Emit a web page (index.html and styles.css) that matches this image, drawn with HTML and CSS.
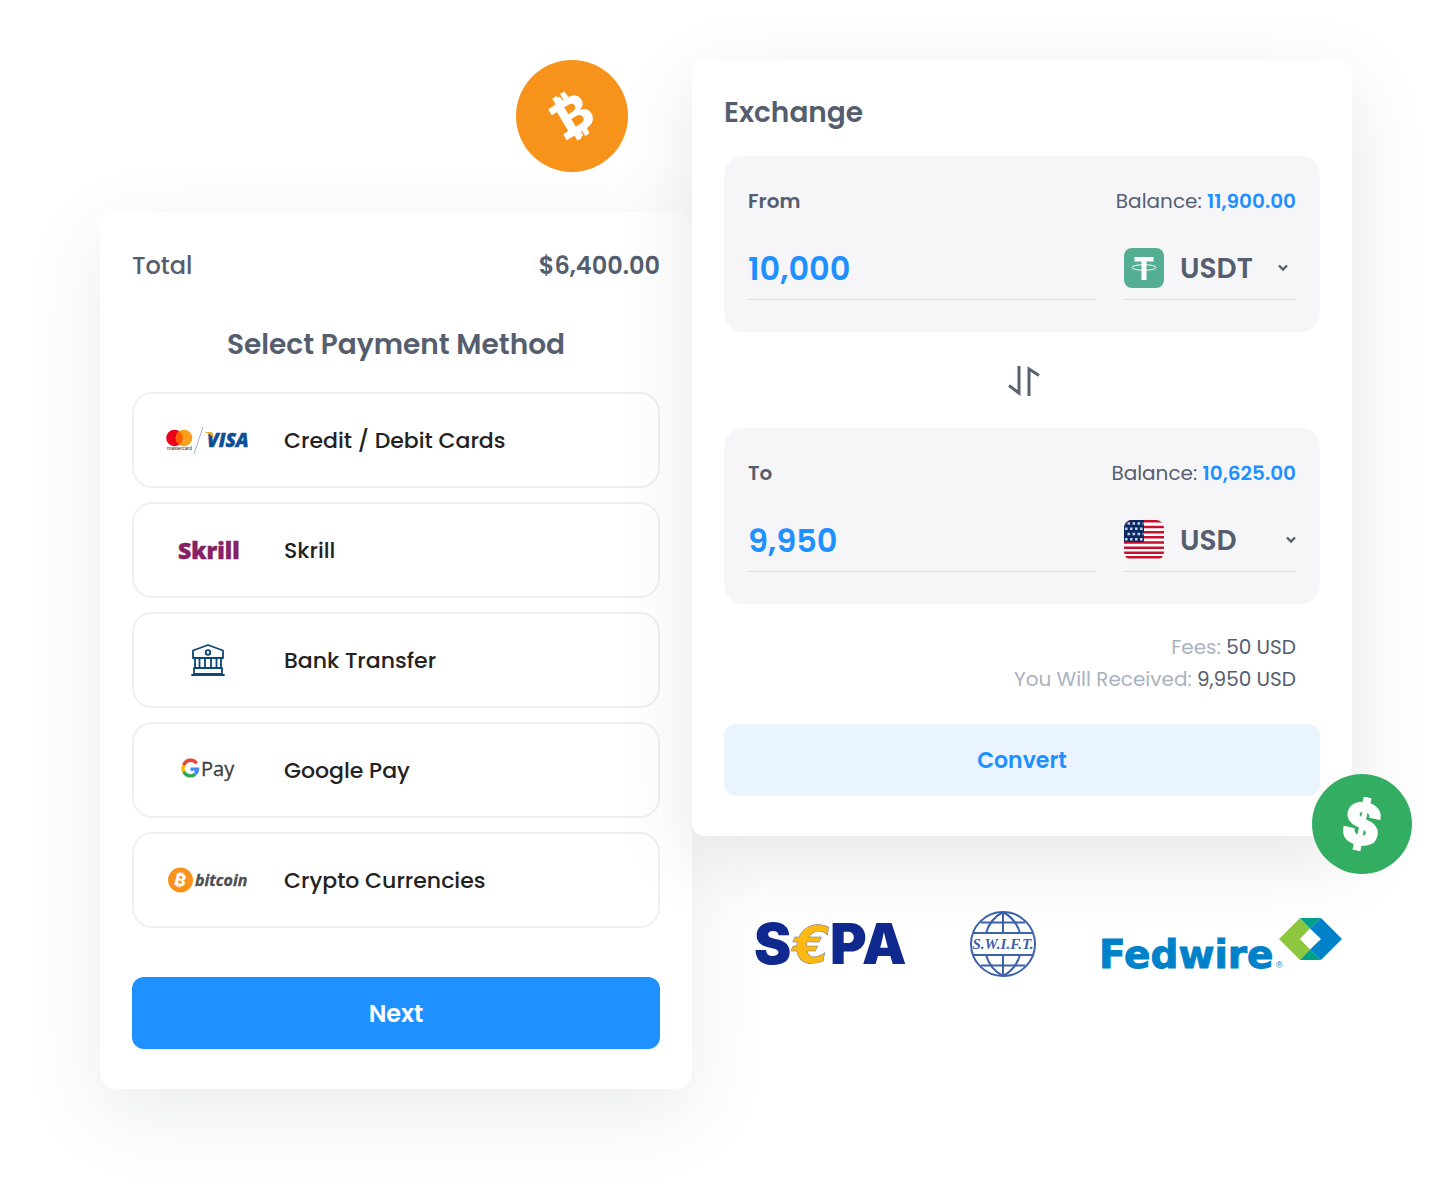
FILE: index.html
```
<!DOCTYPE html>
<html lang="en">
<head>
  <meta charset="UTF-8" />
  <meta name="viewport" content="width=device-width, initial-scale=1.0"/>
  <title>Payment and Exchange</title>
  <link rel="stylesheet" href="styles.css">
</head>
<body>
  <main class="layout">
    <div class="left">
      <svg class="coin" viewBox="0 0 112 112" role="img" aria-label="Bitcoin">
        <circle cx="56" cy="56" r="56" fill="#f7931a"/>
        <g transform="rotate(-31 56 56)" fill="#fff">
          <text x="59" y="74" class="glyph" font-size="50" text-anchor="middle">₿</text>
          <path d="M39 38h10v7H39zM39 67h10v7H39zM48 31h5v9h-5zM57 31h5v9h-5zM48 72h5v8h-5zM57 72h5v8h-5z"/>
        </g>
      </svg>

      <section class="card payment">
        <div class="total">
          <span>Total</span>
          <strong>$6,400.00</strong>
        </div>
        <h2>Select Payment Method</h2>
        <div class="methods">
          <button class="method">
            <svg width="84" height="32" viewBox="0 0 84 32">
              <circle cx="8.500" cy="14" r="8.300" fill="#eb001b"/>
              <circle cx="18" cy="14" r="8.300" fill="#f79e1b"/>
              <path d="M13.200 7.200a8.300 8.300 0 0 1 0 13.600a8.300 8.300 0 0 1 0-13.600z" fill="#ff5f00"/>
              <text x="1" y="26" class="sans" font-size="5" fill="#222">mastercard</text>
              <path d="M37 3L28 30" stroke="#a9b2bf" stroke-width="1"/>
              <text x="41" y="23" class="opensans" font-size="19" font-weight="800" font-style="italic" fill="#0e4e96" stroke="#0e4e96" stroke-width="0.500">VISA</text>
              <path d="M39 8h5.500q2 0 2.500 2.500l1 4Q45 10 39 8.500z" fill="#f7a823"/>
            </svg>
            <span>Credit / Debit Cards</span>
          </button>
          <button class="method">
            <svg width="84" height="32" viewBox="0 0 84 32">
              <text x="12" y="25" class="opensans" font-size="23" font-weight="800" fill="#862165" stroke="#862165" stroke-width="0.500">Skrill</text>
            </svg>
            <span>Skrill</span>
          </button>
          <button class="method">
            <svg width="84" height="36" viewBox="0 0 84 36" fill="none" stroke="#0d4678" stroke-width="1.800" stroke-linejoin="round" stroke-linecap="round">
              <path d="M42 3L57 8.500V16H27V8.500zM29 16v10M33.500 16v10M39 16v10M45 16v10M50.500 16v10M55 16v10M28 26h28v6H28zM26 33h32"/>
              <circle cx="42" cy="10.500" r="2.300"/>
            </svg>
            <span>Bank Transfer</span>
          </button>
          <button class="method">
            <svg width="84" height="32" viewBox="0 0 84 32">
              <g fill="none" stroke-width="3.400">
                <path d="M30.700 9.300A7.300 7.300 0 0 0 17.800 11.200" stroke="#ea4335"/>
                <path d="M17.800 11.200a7.300 7.300 0 0 0 0 6.600" stroke="#fbbc04"/>
                <path d="M17.800 17.800a7.300 7.300 0 0 0 11.300 2.300" stroke="#34a853"/>
                <path d="M29.100 20.100a7.300 7.300 0 0 0 2.400-5H24.500" stroke="#4285f4"/>
              </g>
              <text x="35" y="22" class="opensans" font-size="20" fill="#3c4043" stroke="#3c4043" stroke-width="0.300">Pay</text>
            </svg>
            <span>Google Pay</span>
          </button>
          <button class="method">
            <svg width="84" height="32" viewBox="0 0 84 32">
              <circle cx="14.500" cy="16" r="12.500" fill="#f7931a"/>
              <text x="14.500" y="22" class="glyph" font-size="17" text-anchor="middle" fill="#fff" transform="rotate(14 14.500 16)">₿</text>
              <text x="29" y="22" class="opensans" font-size="16" font-weight="700" font-style="italic" fill="#4d4d4d" stroke="#4d4d4d" stroke-width="0.300">bitcoin</text>
            </svg>
            <span>Crypto Currencies</span>
          </button>
        </div>
        <button class="btn next">Next</button>
      </section>
    </div>

    <div class="right">
      <section class="card exchange">
        <h2>Exchange</h2>

        <div class="box">
          <div class="box-head">
            <label for="from">From</label>
            <span>Balance: <b>11,900.00</b></span>
          </div>
          <div class="fields">
            <input type="text" id="from" value="10,000">
            <div class="currency inset">
              <svg width="40" height="40" viewBox="0 0 40 40">
                <rect width="40" height="40" rx="8" fill="#53ae94"/>
                <path d="M10.500 9h19v4.500H22.500V32h-5V13.500h-7z" fill="#fff"/>
                <ellipse cx="20" cy="19.500" rx="12" ry="2.800" fill="none" stroke="#fff" stroke-width="1"/>
              </svg>
              <select aria-label="From currency"><option>USDT</option><option>USD</option></select>
              <svg class="chevron" width="10" height="8" viewBox="0 0 10 8"><path d="M1 1.500l4 4 4-4"/></svg>
            </div>
          </div>
        </div>

        <button class="swap" aria-label="Swap currencies">
          <svg width="36" height="36" viewBox="0 0 36 36" fill="none" stroke="#5a6272" stroke-width="3">
            <path d="M15 4v27L5 23.500M25 34V7L35 13.500"/>
          </svg>
        </button>

        <div class="box">
          <div class="box-head">
            <label for="to">To</label>
            <span>Balance: <b>10,625.00</b></span>
          </div>
          <div class="fields">
            <input type="text" id="to" value="9,950">
            <div class="currency">
              <svg width="40" height="40" viewBox="0 0 40 40">
                <clipPath id="flag"><rect width="40" height="40" rx="8"/></clipPath>
                <g clip-path="url(#flag)">
                  <rect width="40" height="40" fill="#fff"/>
                  <path d="M0 1.300h40M0 7h40M0 12.200h40M0 17.300h40M0 22.500h40M0 27.700h40M0 32.800h40M0 37.200h40" stroke="#c8102e" stroke-width="2.600"/>
                  <rect width="20" height="22" fill="#0a2a66"/>
                  <path d="M3.500 3.500h16M1 8.800h18M3.500 14h16M1 19.200h18" stroke="#c5cde0" stroke-width="2.600" stroke-dasharray="2.600 2.400"/>
                </g>
              </svg>
              <select aria-label="To currency"><option>USD</option><option>USDT</option></select>
              <svg class="chevron" width="10" height="8" viewBox="0 0 10 8"><path d="M1 1.500l4 4 4-4"/></svg>
            </div>
          </div>
        </div>

        <div class="summary">
          <p>Fees: <span>50 USD</span></p>
          <p>You Will Received: <span>9,950 USD</span></p>
        </div>
        <button class="btn convert">Convert</button>

        <svg class="dollar" viewBox="0 0 100 100" role="img" aria-label="US dollar">
          <circle cx="50" cy="50" r="50" fill="#32ad62"/>
          <g transform="rotate(12 50 50)" fill="#fff">
            <text x="50" y="70" class="glyph" font-size="56" text-anchor="middle" stroke="#fff" stroke-width="2">$</text>
            <path d="M46 23h8v8h-8zM46 69h8v8h-8z"/>
          </g>
        </svg>
      </section>

      <div class="partners">
        <svg width="148" height="48" viewBox="0 0 148 48" role="img" aria-label="SEPA">
          <g class="black" font-size="56" fill="#10298e">
            <text x="-2" y="44">S</text>
            <text x="74" y="44">P</text>
            <text x="106" y="44">A</text>
          </g>
          <text x="37" y="43" class="dejavu" font-size="52" font-weight="700" font-style="italic" fill="#fdb913" stroke="#6f7896" stroke-width="0.500">€</text>
        </svg>
        <svg width="66" height="66" viewBox="0 0 66 66" role="img" aria-label="SWIFT">
          <g fill="none" stroke="#3d61aa" stroke-width="2">
            <circle cx="33" cy="33" r="32"/>
            <path d="M33 1v21M33 44v21M3 22h60M3 44h60M11 11.500h44M11 54.500h44"/>
            <path d="M33 1Q20 8 16 22M33 1Q46 8 50 22M33 65Q20 58 16 44M33 65Q46 58 50 44"/>
          </g>
          <text x="33" y="38" class="serif" font-size="15" font-weight="700" font-style="italic" text-anchor="middle" fill="#3d61aa">S.W.I.F.T.</text>
        </svg>
        <svg width="240" height="54" viewBox="0 0 240 54" role="img" aria-label="Fedwire">
          <text x="-3" y="51" class="dejavu" font-size="39" font-weight="700" fill="#0082ca" stroke="#0082ca" stroke-width="1">Fedwire</text>
          <text x="174" y="51" class="sans" font-size="9" fill="#0082ca">®</text>
          <path d="M198 1L177 22l21 21 10-10.500L198 22l10-10.500z" fill="#8dc63f"/>
          <path d="M219 1l21 21-21 21-11-10.500L219 22 208 11.500z" fill="#0082ca"/>
          <path d="M198 1h21l-11 10.500zM198 43h21l-11-10.500z" fill="#00a08a"/>
        </svg>
      </div>
    </div>
  </main>
</body>
</html>
```
FILE: styles.css
```
* {
  box-sizing: border-box;
}

body {
  margin: 0;
  min-height: 100vh;
  font-family: "Poppins", "Inter", sans-serif;
  color: #555e6e;
  background: #fff;
}

button, input, select {
  font-family: inherit;
  color: inherit;
}

button {
  cursor: pointer;
}

svg {
  flex-shrink: 0;
}

h2 {
  margin: 0;
  font-size: 28px;
  font-weight: 600;
}

.layout {
  display: grid;
  grid-template-columns: minmax(0, 592fr) minmax(0, 660fr);
  align-items: start;
  padding: 60px 100px;
}

.left {
  display: flex;
  flex-direction: column;
  gap: 40px;
}

.coin {
  width: 112px;
  height: 112px;
  margin-right: 64px;
  align-self: flex-end;
}

.card {
  background: #fff;
  border-radius: 12px;
  padding: 32px 32px 40px;
}

.payment {
  border-radius: 16px;
  box-shadow: 0 24px 80px rgba(60, 70, 80, 0.1);
}

.total {
  display: flex;
  justify-content: space-between;
  font-size: 24px;
  font-weight: 500;
  line-height: 44px;
}

.total strong {
  font-weight: 600;
}

.payment h2 {
  margin: 32px 0 22px;
  line-height: 50px;
  text-align: center;
}

.methods {
  display: flex;
  flex-direction: column;
  gap: 14px;
}

.method {
  display: flex;
  align-items: center;
  gap: 34px;
  height: 96px;
  padding: 0 32px;
  border: 2px solid #f0f0f2;
  border-radius: 20px;
  background: none;
  color: #222;
  font-size: 22px;
  font-weight: 500;
  text-align: left;
}

.btn {
  width: 100%;
  height: 72px;
  border: none;
  border-radius: 12px;
  font-size: 24px;
  font-weight: 600;
}

.next {
  margin-top: 49px;
  background: #1e90ff;
  color: #fff;
}

/* Exchange */
.exchange {
  position: relative;
  box-shadow: 0 24px 80px rgba(0, 0, 0, 0.1);
}

.exchange h2 {
  margin-bottom: 22px;
  line-height: 42px;
}

.box {
  padding: 24px 24px 32px;
  border-radius: 20px;
  background: #f6f6f9;
}

.box-head {
  display: flex;
  justify-content: space-between;
  margin-bottom: 14px;
  font-size: 20px;
  line-height: 42px;
}

.box-head label,
.box-head b {
  font-weight: 600;
}

.box-head b {
  color: #1e90ff;
}

.fields {
  display: flex;
  gap: 28px;
}

.fields input {
  flex: 1;
  width: 100%;
  min-width: 0;
  height: 64px;
  padding: 2px 0 0;
  border: none;
  border-bottom: 1px solid #dfe0e3;
  background: none;
  color: #1e90ff;
  font-size: 32px;
  font-weight: 600;
}

.currency {
  display: flex;
  align-items: center;
  gap: 16px;
  width: 172px;
  height: 64px;
  border-bottom: 1px solid #dfe0e3;
}

.currency.inset {
  padding-right: 8px;
}

.currency select {
  flex: 1;
  min-width: 0;
  padding: 2px 0 0;
  border: none;
  background: none;
  appearance: none;
  font-size: 28px;
  font-weight: 600;
}

.chevron {
  fill: none;
  stroke: #555e6e;
  stroke-width: 2.4;
}

.swap {
  display: flex;
  align-items: center;
  justify-content: center;
  width: 100%;
  height: 96px;
  padding: 0;
  border: none;
  background: none;
}

.summary {
  padding: 27px 24px 29px;
  font-size: 20px;
  line-height: 32px;
  text-align: right;
  color: #a9b2bf;
}

.summary p {
  margin: 0;
}

.summary span {
  color: #555e6e;
}

.convert {
  display: block;
  background: #eaf4ff;
  color: #1e90ff;
  font-size: 22px;
}

.dollar {
  position: absolute;
  right: -60px;
  bottom: -38px;
  width: 100px;
  height: 100px;
}

.partners {
  display: flex;
  align-items: center;
  justify-content: space-between;
  margin-top: 75px;
  padding: 0 10px 0 64px;
}

.partners svg {
  overflow: visible;
}

/* Lettering inside logos */
.glyph {
  font-family: "Inter", sans-serif;
  font-weight: 800;
}

.black {
  font-family: "Inter", sans-serif;
  font-weight: 900;
}

.sans {
  font-family: "Liberation Sans", sans-serif;
}

.dejavu {
  font-family: "DejaVu Sans", sans-serif;
}

.opensans {
  font-family: "Open Sans", sans-serif;
}

.serif {
  font-family: "Liberation Serif", serif;
}

@media (max-width: 1100px) {
  .layout {
    grid-template-columns: 1fr;
    gap: 40px;
    padding: 40px 60px;
  }
}
```
